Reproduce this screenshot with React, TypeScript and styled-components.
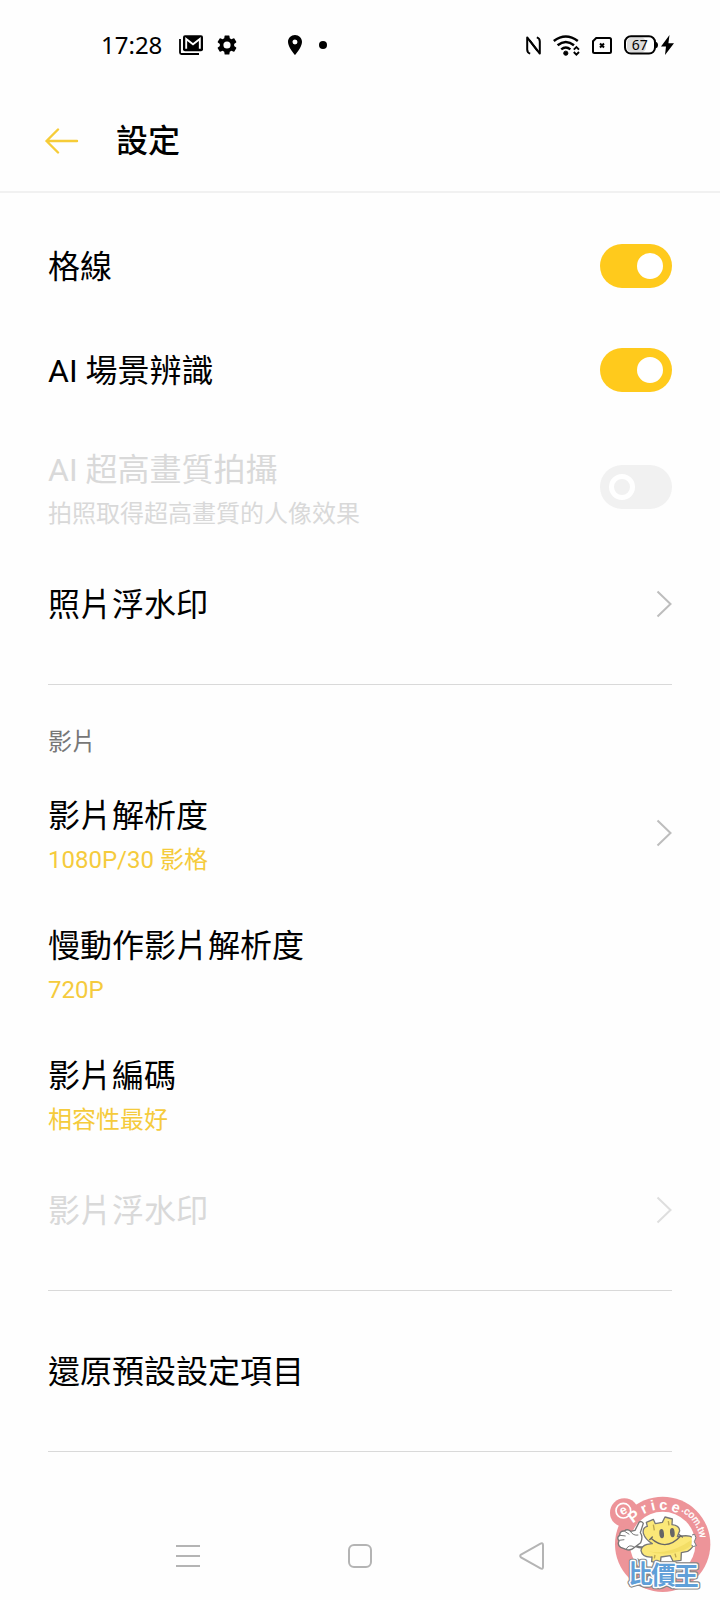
import React, { useId, useState } from "react";
import styled, { createGlobalStyle, css } from "styled-components";

const GlobalStyle = createGlobalStyle`
  *, *::before, *::after { box-sizing: border-box; }
  body {
    margin: 0;
    background: #fefefe;
    color: #000;
    font-family: Roboto, "Noto Sans CJK TC", sans-serif;
  }
  button { font: inherit; color: inherit; background: none; border: 0; padding: 0; text-align: left; cursor: pointer; }
  button:disabled { cursor: default; }
  svg { display: block; flex: none; }
`;

const Screen = styled.div`
  min-height: 100vh;
  display: flex;
  flex-direction: column;
  position: relative;
`;

const StatusBar = styled.div`
  display: flex;
  align-items: center;
  justify-content: space-between;
  height: 90px;
  padding: 0 46px 0 101px;
`;

const StatusGroup = styled.div<{ $gap: number }>`
  display: flex;
  align-items: center;
  gap: ${(p) => p.$gap}px;
`;

const Clock = styled.time`
  font-family: "Noto Sans", sans-serif;
  font-size: 24px;
  line-height: 32px;
  margin-right: 5px;
`;

const NoticeGap = styled.span`
  width: 20px;
`;

const Header = styled.header`
  display: flex;
  align-items: center;
  gap: 37px;
  height: 103px;
  padding: 0 45px;
  border-bottom: 2px solid #f1f1f1;
`;

const Title = styled.h1`
  margin: 0;
  font-size: 32px;
  line-height: 40px;
  font-weight: 500;
`;

const Main = styled.main`
  padding: 21px 48px 0;
`;

const rowStyle = css<{ $tall?: boolean; $muted?: boolean }>`
  display: flex;
  align-items: center;
  justify-content: space-between;
  width: 100%;
  height: ${(p) => (p.$tall ? 130 : 104)}px;
  color: ${(p) => (p.$muted ? "#d9d9d9" : "#000")};
`;

const ToggleRow = styled.div<{ $tall?: boolean; $muted?: boolean }>`
  ${rowStyle}
`;

const LinkRow = styled.button<{ $tall?: boolean; $muted?: boolean }>`
  ${rowStyle}
`;

const Texts = styled.span<{ $tall?: boolean }>`
  display: flex;
  flex-direction: column;
  gap: 4px;
  padding-top: ${(p) => (p.$tall ? 5 : 2)}px;
`;

const Label = styled.span`
  font-size: 32px;
  line-height: 44px;
`;

const Note = styled.span<{ $accent?: boolean }>`
  font-size: 24px;
  line-height: 36px;
  color: ${(p) => (p.$accent ? "#f5cb3c" : "inherit")};
`;

const Switch = styled.input`
  appearance: none;
  margin: 0;
  flex: none;
  width: 72px;
  height: 44px;
  padding: 9px;
  border-radius: 22px;
  background: #f1f1f1;
  display: flex;
  align-items: center;
  cursor: pointer;

  &::before {
    content: "";
    width: 26px;
    height: 26px;
    border-radius: 50%;
    border: 5px solid #fff;
  }
  &:checked {
    background: #ffca1c;
    justify-content: flex-end;
  }
  &:checked::before {
    background: #fff;
  }
`;

const Rule = styled.hr`
  margin: 28px 0;
  border: 0;
  height: 1px;
  background: #d9d9d9;
`;

const SectionTitle = styled.h2`
  margin: 0;
  height: 55px;
  font-size: 24px;
  line-height: 58px;
  font-weight: 400;
  color: #777;
`;

const NavBar = styled.nav`
  display: flex;
  justify-content: space-around;
  align-items: center;
  height: 88px;
  margin-top: auto;
  padding: 0 102px;
`;

const NavButton = styled.button`
  display: grid;
  place-items: center;
  width: 64px;
  height: 64px;
`;

const Sticker = styled.svg`
  position: absolute;
  right: 0;
  bottom: 0;
  pointer-events: none;
`;

const Chevron = ({ muted }: { muted?: boolean }) => (
  <svg width="16" height="28" viewBox="0 0 16 28" fill="none" stroke={muted ? "#dedede" : "#bdbdbd"} strokeWidth="2">
    <path d="M1.5 1.5 14.5 14 1.5 26.5" />
  </svg>
);

const MailIcon = () => (
  <svg width="24" height="20" viewBox="0 0 24 20">
    <path d="M1 4V17.5Q1 19 2.5 19H20" fill="none" stroke="#000" strokeWidth="1.8" />
    <rect x="4" y="0.3" width="20" height="16" rx="2" />
    <path d="M7.2 13.8V4L14 9.3 20.8 4V13.8" fill="none" stroke="#fff" strokeWidth="1.9" />
    <path d="M7.3 2.3H20.7L14 7Z" />
  </svg>
);

const GearIcon = () => (
  <svg width="24" height="24" viewBox="0 0 24 24">
    <path d="M19.14 12.94c.04-.3.06-.61.06-.94s-.02-.64-.07-.94l2.03-1.58a.49.49 0 0 0 .12-.61l-1.92-3.32a.49.49 0 0 0-.59-.22l-2.39.96c-.5-.38-1.03-.7-1.62-.94l-.36-2.54a.48.48 0 0 0-.48-.41h-3.84a.47.47 0 0 0-.47.41l-.36 2.54c-.59.24-1.13.57-1.62.94l-2.39-.96a.48.48 0 0 0-.59.22L2.74 8.87a.47.47 0 0 0 .12.61l2.03 1.58c-.05.3-.09.63-.09.94s.02.64.07.94l-2.03 1.58a.49.49 0 0 0-.12.61l1.92 3.32c.12.22.37.29.59.22l2.39-.96c.5.38 1.03.7 1.62.94l.36 2.54c.05.24.24.41.48.41h3.84c.24 0 .44-.17.47-.41l.36-2.54c.59-.24 1.13-.56 1.62-.94l2.39.96c.22.08.47 0 .59-.22l1.92-3.32a.47.47 0 0 0-.12-.61l-2.01-1.58zM12 15.6a3.6 3.6 0 1 1 0-7.2 3.6 3.6 0 0 1 0 7.2z" />
  </svg>
);

const PinIcon = () => (
  <svg width="24" height="24" viewBox="0 0 24 24">
    <path d="M12 2C8.13 2 5 5.13 5 9c0 5.25 7 13 7 13s7-7.75 7-13c0-3.87-3.13-7-7-7zm0 9.5a2.5 2.5 0 0 1 0-5 2.5 2.5 0 0 1 0 5z" />
  </svg>
);

const DotIcon = () => (
  <svg width="8" height="8" viewBox="0 0 8 8">
    <circle cx="4" cy="4" r="4" />
  </svg>
);

const NfcIcon = () => (
  <svg width="15" height="19" viewBox="0 0 15 19" fill="none" stroke="#000" strokeWidth="2" strokeLinejoin="round">
    <path d="M4.2 17.6Q1.2 16.8 1.2 13.5V1.4L11.4 14.6" />
    <path d="M10.8 1.4Q13.8 2.2 13.8 5.5V17.6L3.6 4.4" />
  </svg>
);

const WifiIcon = () => (
  <svg width="27" height="21" viewBox="0 0 27 21" fill="none" stroke="#000">
    <path d="M.8 6Q12.8-3 24.8 6" strokeWidth="2.6" />
    <path d="M4.6 10.2Q12.8 3.8 21 10.2" strokeWidth="2.6" />
    <path d="M8.2 14.4Q12.8 10.7 17.4 14.4" strokeWidth="2.4" />
    <circle cx="12.8" cy="18.2" r="2.1" />
    <circle cx="12.8" cy="18.2" r="2" fill="#000" stroke="none" />
    <path d="M20.8 14.6 23.4 12 26 14.6M20.8 17 23.4 19.6 26 17" strokeWidth="1.9" />
  </svg>
);

const SimIcon = () => (
  <svg width="20" height="17" viewBox="0 0 20 17" fill="none" stroke="#000">
    <path d="M4.2 1H17.5Q19 1 19 2.5V14.5Q19 16 17.5 16H2.5Q1 16 1 14.5V4.2Z" strokeWidth="2" />
    <path d="M8 6.5 12 10.5M12 6.5 8 10.5" strokeWidth="2" />
  </svg>
);

const BatteryIcon = () => (
  <svg width="34" height="20" viewBox="0 0 34 20">
    <rect x="3" y="2.5" width="19" height="15" rx="5" fill="#dcdcdc" />
    <rect x="1" y="1.2" width="30" height="17.4" rx="6" fill="none" stroke="#000" strokeWidth="2" />
    <path d="M31 6.5Q34 7 34 10T31 13.5Z" />
    <text x="15.8" y="15" textAnchor="middle" fontFamily="Noto Sans, sans-serif" fontSize="14">67</text>
  </svg>
);

const BoltIcon = () => (
  <svg width="13" height="20" viewBox="0 0 13 20">
    <path d="M8.5 0 0 11.5H5L4 20 13 8.2H7.4Z" />
  </svg>
);

const Mascot = () => (
  <Sticker width="120" height="115" viewBox="0 0 360 345" role="img" aria-label="ePrice 比價王">
    <defs>
      <path id="domain-arc" d="M74 178A114 114 0 0 1 302 178A114 114 0 0 1 297 215" />
    </defs>
    <circle cx="188" cy="178" r="143" fill="#ed9499" />
    <circle cx="73" cy="83" r="43" fill="#ed9499" />
    <circle cx="188" cy="178" r="98" fill="#fff" />
    <g fill="#fff" fontFamily="Liberation Sans, sans-serif" fontWeight="700">
      <circle cx="70" cy="77" r="22" fill="none" stroke="#fff" strokeWidth="5" />
      <text x="70" y="88" fontSize="38" textAnchor="middle" transform="rotate(-25 70 77)">e</text>
      <text x="103" y="109" fontSize="46" textAnchor="middle" transform="rotate(-36 103 96)">P</text>
      <text x="133" y="85" fontSize="44" textAnchor="middle" transform="rotate(-26 133 73)">r</text>
      <text x="159" y="76" fontSize="44" textAnchor="middle" transform="rotate(-13 159 64)">i</text>
      <text x="190" y="75" fontSize="44" textAnchor="middle">c</text>
      <text x="227" y="82" fontSize="44" textAnchor="middle" transform="rotate(18 227 70)">e</text>
      <text fontSize="30" fontWeight="400" stroke="#fff">
        <textPath href="#domain-arc" startOffset="236">.com.tw</textPath>
      </text>
    </g>
    <path d="M112 218Q118 255 153 278L103 301Q153 313 191 291L128 232Z" fill="#909090" />
    <g stroke="#777" strokeWidth="4" strokeLinejoin="round">
      <path d="M98 175Q116 193 137 184" fill="none" strokeWidth="7" />
      <path d="M105 136 117 112Q124 106 130 115L121 143Q130 155 122 173L104 187Q92 199 78 193L62 187Q51 180 57 168Q49 157 59 151Q59 137 73 138Q82 130 92 139Z" fill="#fff" />
      <path d="M57 166 73 164M60 151 77 153M74 139 88 148M91 139Q100 153 115 150M79 192Q87 176 104 187" fill="none" strokeWidth="3" />
      <path d="M139 112 160 103 166 116 187 112 195 96 217 102 216 119Q238 121 239 137L232 155Q281 146 281 166Q286 185 263 199L244 203 243 226 219 229 211 212 183 216 181 235 155 230 156 216Q127 218 123 197Q124 183 141 178L157 176Q136 164 130 145Q127 127 142 124Z" fill="#fbe878" />
      <path d="M276 150 284 148Q292 158 283 170L289 182Q280 188 274 180" fill="#fff" strokeWidth="3" />
    </g>
    <path d="M145 199Q197 209 250 180L275 165Q281 187 240 199 190 214 145 199Z" fill="#ecd354" opacity=".5" />
    <ellipse cx="185" cy="146" rx="7" ry="14" fill="#666" transform="rotate(-5 185 146)" />
    <ellipse cx="217" cy="143" rx="7" ry="14" fill="#666" transform="rotate(-5 217 143)" />
    <path d="M153 160Q198 201 242 153M149 164 157 156M238 149 247 156" fill="none" stroke="#666" strokeWidth="4" strokeLinecap="round" />
    <path d="M160 119 163 136M205 108 207 121M165 210 163 220M225 206 228 217" fill="none" stroke="#bda64d" strokeWidth="4" />
    <g fontFamily="Noto Sans CJK TC, sans-serif" fontSize="74" fontWeight="700" textAnchor="middle" strokeLinejoin="round">
      {[
        { stroke: "#858585", width: 16 },
        { stroke: "#fff", width: 9 },
        { stroke: "none", width: 0 },
      ].map((layer) => (
        <g key={layer.stroke} fill="#5f9fd8" stroke={layer.stroke} strokeWidth={layer.width}>
          <text x="122" y="293">比</text>
          <text x="190" y="296">價</text>
          <text x="259" y="300">王</text>
        </g>
      ))}
    </g>
  </Sticker>
);

type ItemProps = { label: string; note?: string; disabled?: boolean };

function ToggleItem({ label, note, disabled, initial }: ItemProps & { initial: boolean }) {
  const id = useId();
  const [on, setOn] = useState(initial);
  return (
    <ToggleRow $tall={!!note} $muted={disabled}>
      <Texts as="label" htmlFor={id} $tall={!!note}>
        <Label>{label}</Label>
        {note && <Note>{note}</Note>}
      </Texts>
      <Switch id={id} type="checkbox" role="switch" checked={on} disabled={disabled} onChange={() => setOn(!on)} />
    </ToggleRow>
  );
}

function LinkItem({ label, note, disabled, arrow }: ItemProps & { arrow?: boolean }) {
  return (
    <LinkRow type="button" $tall={!!note} $muted={disabled} disabled={disabled}>
      <Texts $tall={!!note}>
        <Label>{label}</Label>
        {note && <Note $accent>{note}</Note>}
      </Texts>
      {arrow && <Chevron muted={disabled} />}
    </LinkRow>
  );
}

export default function App() {
  return (
    <Screen lang="zh-Hant">
      <GlobalStyle />
      <StatusBar>
        <StatusGroup $gap={12}>
          <Clock>17:28</Clock>
          <MailIcon />
          <GearIcon />
          <NoticeGap />
          <PinIcon />
          <DotIcon />
        </StatusGroup>
        <StatusGroup $gap={12}>
          <NfcIcon />
          <WifiIcon />
          <SimIcon />
          <StatusGroup $gap={3}>
            <BatteryIcon />
            <BoltIcon />
          </StatusGroup>
        </StatusGroup>
      </StatusBar>
      <Header>
        <button type="button" aria-label="返回">
          <svg width="34" height="26" viewBox="0 0 34 26" fill="none" stroke="#f6cc38" strokeWidth="2.4" strokeLinecap="round" strokeLinejoin="round">
            <path d="M13 1.5 1.5 13 13 24.5M1.5 13H32" />
          </svg>
        </button>
        <Title>設定</Title>
      </Header>
      <Main>
        <ToggleItem label="格線" initial />
        <ToggleItem label="AI 場景辨識" initial />
        <ToggleItem label="AI 超高畫質拍攝" note="拍照取得超高畫質的人像效果" initial={false} disabled />
        <LinkItem label="照片浮水印" arrow />
        <Rule />
        <SectionTitle>影片</SectionTitle>
        <LinkItem label="影片解析度" note="1080P/30 影格" arrow />
        <LinkItem label="慢動作影片解析度" note="720P" />
        <LinkItem label="影片編碼" note="相容性最好" />
        <LinkItem label="影片浮水印" disabled arrow />
        <Rule />
        <LinkItem label="還原預設設定項目" />
        <Rule />
      </Main>
      <NavBar>
        <NavButton type="button" aria-label="最近使用">
          <svg width="24" height="24" viewBox="0 0 24 24" stroke="#b4b4b4" strokeWidth="2">
            <path d="M0 2H24M0 12H24M0 22H24" />
          </svg>
        </NavButton>
        <NavButton type="button" aria-label="主畫面">
          <svg width="24" height="24" viewBox="0 0 24 24" fill="none" stroke="#b4b4b4" strokeWidth="2">
            <rect x="1" y="1" width="22" height="22" rx="5" />
          </svg>
        </NavButton>
        <NavButton type="button" aria-label="上一頁">
          <svg width="26" height="28" viewBox="0 0 26 28" fill="none" stroke="#b4b4b4" strokeWidth="2">
            <path d="M2 12.6 21.5 1.6Q24 .6 24 3V25Q24 27.4 21.5 26.4L2 15.4Q.4 14 2 12.6Z" />
          </svg>
        </NavButton>
      </NavBar>
      <Mascot />
    </Screen>
  );
}
